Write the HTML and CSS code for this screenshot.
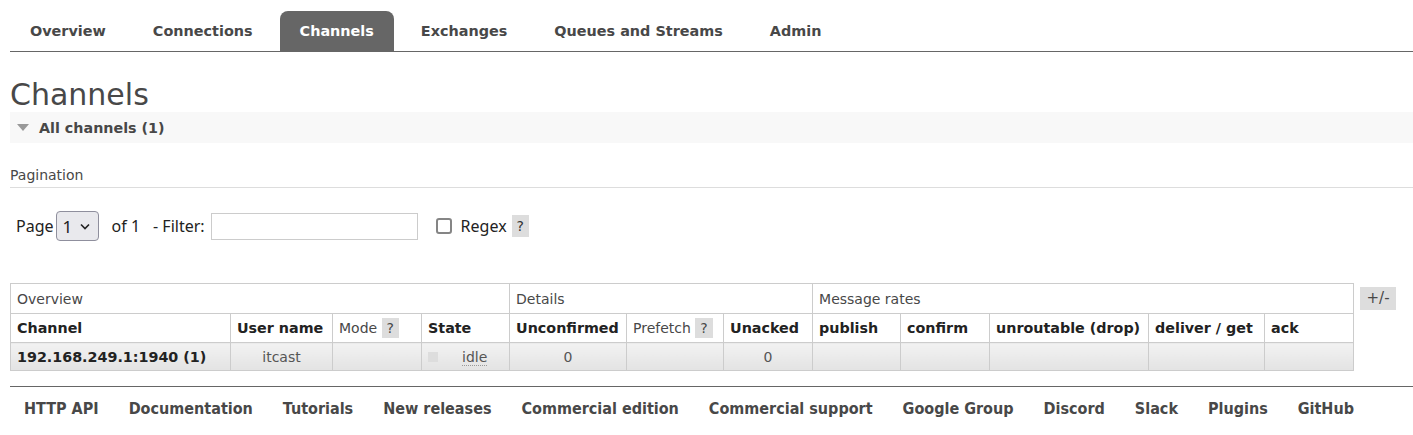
FILE: index.html
```html
<!DOCTYPE html>
<html>
<head>
<meta charset="utf-8">
<title>RabbitMQ Management - Channels</title>
<link rel="stylesheet" href="styles.css">
</head>
<body>
<div class="page">
  <nav class="menu">
    <a class="tab" href="#">Overview</a>
    <a class="tab" href="#">Connections</a>
    <a class="tab active" href="#">Channels</a>
    <a class="tab" href="#">Exchanges</a>
    <a class="tab" href="#">Queues and Streams</a>
    <a class="tab" href="#">Admin</a>
  </nav>

  <h1 class="title">Channels</h1>

  <div class="section-head">
    <span class="tri"></span>
    <span class="section-title">All channels (1)</span>
  </div>

  <div class="pag-head">Pagination</div>

  <div class="filter-row">
    <span class="lbl">Page</span>
    <span class="select-wrap">
      <select class="page-select"><option>1</option></select>
      <svg class="chev" width="10" height="7" viewBox="0 0 10 7"><path d="M1 1.5 L5 5.5 L9 1.5" fill="none" stroke="#222" stroke-width="1.6"/></svg>
    </span>
    <span class="lbl of">of 1</span>
    <span class="lbl filt">- Filter:</span>
    <input class="filter-input" type="text">
    <input class="chk" type="checkbox">
    <span class="lbl regex">Regex</span>
    <span class="help help-form">?</span>
  </div>

  <div class="table-row">
    <table class="list">
      <colgroup>
        <col class="c220"><col class="c102"><col class="c89"><col class="c88">
        <col class="c117"><col class="c97"><col class="c89">
        <col class="c88"><col class="c89"><col class="c159"><col class="c116"><col class="c89">
      </colgroup>
      <thead>
        <tr class="grp">
          <th colspan="4">Overview</th>
          <th colspan="3">Details</th>
          <th colspan="5">Message rates</th>
        </tr>
        <tr class="hdr">
          <th>Channel</th>
          <th>User name</th>
          <th class="plain">Mode <span class="help">?</span></th>
          <th>State</th>
          <th>Unconfirmed</th>
          <th class="plain">Prefetch <span class="help">?</span></th>
          <th>Unacked</th>
          <th>publish</th>
          <th>confirm</th>
          <th>unroutable (drop)</th>
          <th>deliver / get</th>
          <th>ack</th>
        </tr>
      </thead>
      <tbody>
        <tr class="data">
          <td class="chan">192.168.249.1:1940 (1)</td>
          <td class="c">itcast</td>
          <td></td>
          <td class="state"><span class="sq"></span><abbr class="idle">idle</abbr></td>
          <td class="c">0</td>
          <td></td>
          <td class="c">0</td>
          <td></td>
          <td></td>
          <td></td>
          <td></td>
          <td></td>
        </tr>
      </tbody>
    </table>
    <span class="toggle">+/-</span>
  </div>

  <footer class="footer">
    <a href="#">HTTP API</a>
    <a href="#">Documentation</a>
    <a href="#">Tutorials</a>
    <a href="#">New releases</a>
    <a href="#">Commercial edition</a>
    <a href="#">Commercial support</a>
    <a href="#">Google Group</a>
    <a href="#">Discord</a>
    <a href="#">Slack</a>
    <a href="#">Plugins</a>
    <a href="#">GitHub</a>
  </footer>
</div>
</body>
</html>
```

FILE: styles.css
```css
html, body {
  margin: 0;
  padding: 0;
  background: #fff;
}
body {
  font: 14px "DejaVu Sans", Verdana, sans-serif;
  color: #484848;
}
.page {
  padding-left: 10px;
}
.menu {
  display: flex;
  gap: 7px;
  padding-top: 11px;
  border-bottom: 1px solid #666;
}
.tab {
  display: block;
  height: 40px;
  line-height: 40px;
  padding: 0 20px;
  font-weight: bold;
  font-size: 14.4px;
  color: #484848;
  text-decoration: none;
  border-radius: 8px 8px 0 0;
}
.tab.active {
  background: #666;
  color: #fff;
}
.title {
  margin: 26px 0 0;
  font-size: 30px;
  font-weight: normal;
  line-height: 34px;
  color: #484848;
}
.section-head {
  display: flex;
  align-items: center;
  height: 31px;
  background: #f8f8f8;
  padding-left: 7px;
}
.tri {
  width: 0;
  height: 0;
  border-left: 6.5px solid transparent;
  border-right: 6.5px solid transparent;
  border-top: 7px solid #999;
  margin-right: 10px;
}
.section-title {
  font-weight: bold;
  font-size: 14.3px;
  color: #484848;
}
.pag-head {
  margin-top: 20px;
  line-height: 24px;
  border-bottom: 1px solid #ddd;
}
.filter-row {
  display: flex;
  align-items: center;
  height: 30px;
  margin-top: 23px;
  padding-left: 6px;
  font-family: "Noto Sans", "Open Sans", sans-serif;
  font-size: 16px;
  color: #222;
}
.select-wrap {
  position: relative;
  margin-left: 2px;
  display: block;
  width: 43px;
  height: 30px;
}
.page-select {
  -webkit-appearance: none;
  appearance: none;
  width: 43px;
  height: 30px;
  box-sizing: border-box;
  border: 1px solid #8f8f9d;
  border-radius: 4px;
  background: #e9e9ed;
  font-family: "Noto Sans", sans-serif;
  font-size: 17px;
  color: #222;
  padding: 0 0 0 6px;
  margin: 0;
}
.chev {
  position: absolute;
  right: 9px;
  top: 12px;
  pointer-events: none;
}
.of {
  margin-left: 13px;
}
.filt {
  margin-left: 13px;
}
.filter-input {
  margin: 0 0 0 6px;
  width: 207px;
  height: 27px;
  box-sizing: border-box;
  border: 1px solid #ccc;
  padding: 0 4px;
}
.chk {
  -webkit-appearance: none;
  appearance: none;
  margin: 0 0 0 18px;
  width: 16px;
  height: 16px;
  box-sizing: border-box;
  border: 2px solid #858585;
  border-radius: 3px;
  background: #fff;
}
.regex {
  margin-left: 9px;
}
.help {
  display: inline-block;
  background: #ddd;
  color: #484848;
  font-family: "DejaVu Sans", sans-serif;
  font-size: 14px;
  font-weight: normal;
  padding: 0 5px;
  line-height: 20px;
}
.help-form {
  margin-left: 5px;
  line-height: 22px;
  color: #333;
}
.table-row {
  display: flex;
  align-items: flex-start;
  margin-top: 42px;
}
.list {
  width: 1343px;
  table-layout: fixed;
  border-collapse: collapse;
  border: 1px solid #ccc;
}
.c220 { width: 220px; }
.c102 { width: 102px; }
.c89 { width: 89px; }
.c88 { width: 88px; }
.c117 { width: 117px; }
.c97 { width: 97px; }
.c159 { width: 159px; }
.c116 { width: 116px; }
.list th, .list td {
  border: 1px solid #ccc;
  padding: 0 6px;
  text-align: left;
  white-space: nowrap;
  overflow: hidden;
}
.grp th {
  height: 29px;
  font-weight: normal;
  border-bottom: 1px solid #ccc;
}
.hdr th {
  height: 28px;
  font-weight: bold;
  font-size: 14.3px;
  color: #222;
}
.hdr th.plain {
  font-weight: normal;
  font-size: 14px;
  color: #484848;
}
.data td {
  height: 27px;
  background: linear-gradient(#f2f2f2, #e3e3e3);
  color: #555;
}
.data td.chan {
  font-weight: bold;
  font-size: 14.3px;
  color: #222;
}
.data td.c {
  text-align: center;
}
.sq {
  display: inline-block;
  width: 10px;
  height: 10px;
  background: #ddd;
  vertical-align: middle;
  margin-right: 24px;
}
.idle {
  text-decoration: none;
  border-bottom: 1px dotted #999;
  vertical-align: middle;
}
.toggle {
  display: block;
  margin: 4px 0 0 6px;
  width: 36px;
  height: 23px;
  line-height: 23px;
  background: #ddd;
  text-align: center;
  font-size: 15px;
  color: #484848;
}
.footer {
  margin-top: 15px;
  border-top: 1px solid #666;
  padding: 12px 14px;
  display: flex;
  gap: 30px;
}
.footer a {
  font-family: "DejaVu Sans Condensed", "DejaVu Sans", sans-serif;
  font-stretch: condensed;
  font-weight: bold;
  font-size: 16px;
  line-height: 20px;
  color: #484848;
  text-decoration: none;
}
```
